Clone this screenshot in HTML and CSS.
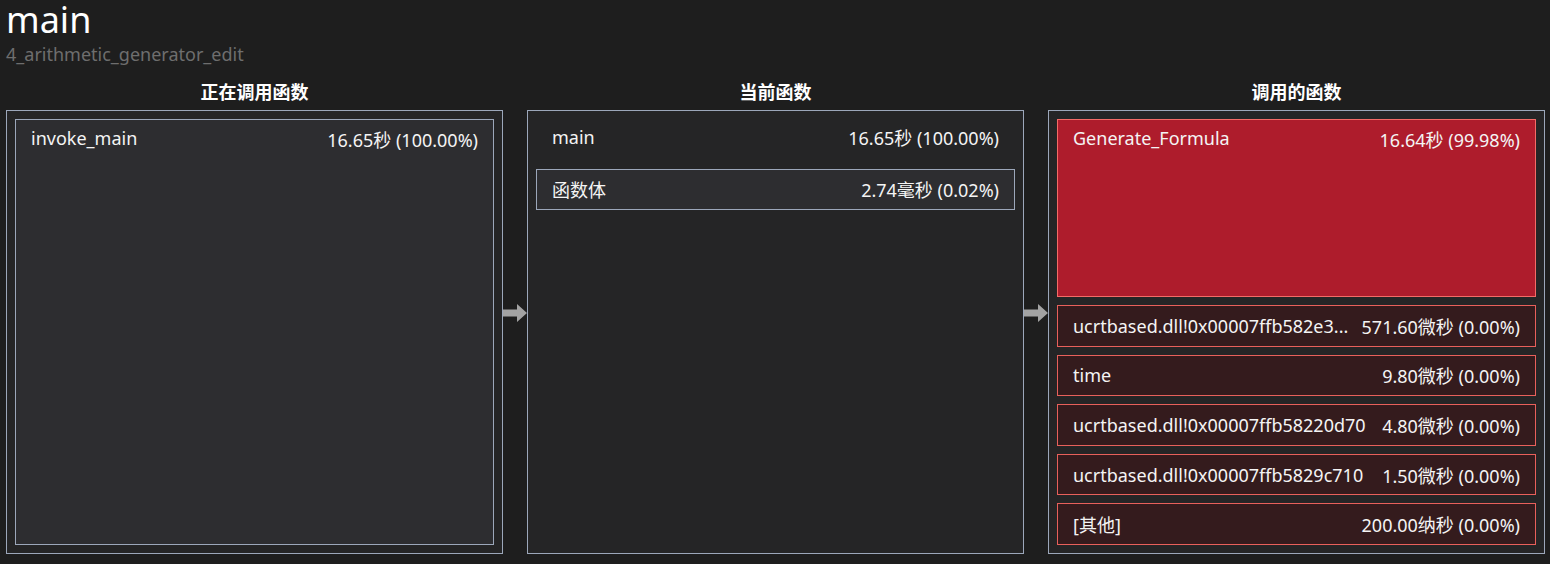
FILE: index.html
```html
<!DOCTYPE html>
<html lang="zh">
<head>
<meta charset="utf-8">
<title>main</title>
<link rel="stylesheet" href="styles.css">
</head>
<body>
<header class="head">
  <h1 class="title">main</h1>
  <div class="subtitle">4_arithmetic_generator_edit</div>
</header>
<main class="cols">
  <section class="col">
    <h2 class="col-title">正在调用函数</h2>
    <div class="panel">
      <div class="item item-grey item-fill">
        <span class="name">invoke_main</span><span class="val">16.65秒 (100.00%)</span>
      </div>
    </div>
  </section>
  <div class="arrow"><svg width="24" height="20" viewBox="0 0 24 20"><path d="M0 6.5H14V1L24 10L14 19V13.5H0Z" fill="#a3a3a3"/></svg></div>
  <section class="col">
    <h2 class="col-title">当前函数</h2>
    <div class="panel">
      <div class="item item-plain">
        <span class="name">main</span><span class="val">16.65秒 (100.00%)</span>
      </div>
      <div class="item item-grey">
        <span class="name">函数体</span><span class="val">2.74毫秒 (0.02%)</span>
      </div>
    </div>
  </section>
  <div class="arrow"><svg width="24" height="20" viewBox="0 0 24 20"><path d="M0 6.5H14V1L24 10L14 19V13.5H0Z" fill="#a3a3a3"/></svg></div>
  <section class="col">
    <h2 class="col-title">调用的函数</h2>
    <div class="panel">
      <div class="item item-hot item-fill">
        <span class="name">Generate_Formula</span><span class="val">16.64秒 (99.98%)</span>
      </div>
      <div class="item item-cold">
        <span class="name">ucrtbased.dll!0x00007ffb582e3...</span><span class="val">571.60微秒 (0.00%)</span>
      </div>
      <div class="item item-cold">
        <span class="name">time</span><span class="val">9.80微秒 (0.00%)</span>
      </div>
      <div class="item item-cold">
        <span class="name">ucrtbased.dll!0x00007ffb58220d70</span><span class="val">4.80微秒 (0.00%)</span>
      </div>
      <div class="item item-cold">
        <span class="name">ucrtbased.dll!0x00007ffb5829c710</span><span class="val">1.50微秒 (0.00%)</span>
      </div>
      <div class="item item-cold">
        <span class="name">[其他]</span><span class="val">200.00纳秒 (0.00%)</span>
      </div>
    </div>
  </section>
</main>
</body>
</html>
```
FILE: styles.css
```css
* { box-sizing: border-box; }
html, body { margin: 0; padding: 0; }
body {
  background: #1e1e1e;
  color: #f1f1f1;
  font-family: "Noto Sans", "Noto Sans CJK SC", sans-serif;
  width: 1550px;
  height: 564px;
  overflow: hidden;
}
.head { padding: 0 0 0 6px; }
.title {
  margin: 0;
  font-size: 36px;
  font-weight: 400;
  line-height: 40px;
  color: #ffffff;
}
.subtitle {
  font-size: 18px;
  line-height: 24px;
  color: #6e6e6e;
  margin-top: 2px;
}
.cols {
  display: flex;
  padding: 0 0 0 6px;
  margin-top: 18px;
}
.col { width: 497px; display: flex; flex-direction: column; }
.col-title {
  margin: 0;
  text-align: center;
  font-size: 18px;
  font-weight: 700;
  line-height: 16px;
  height: 26px;
  color: #ffffff;
}
.panel {
  height: 444px;
  border: 1px solid #9ca7ba;
  background: #252526;
  padding: 8px;
  display: flex;
  flex-direction: column;
  gap: 8px;
}
.arrow {
  width: 24px;
  display: flex;
  align-items: flex-start;
  justify-content: flex-start;
  padding-top: 219px;
}
.arrow svg { display: block; }
.item {
  height: 41.6px;
  flex: none;
  display: flex;
  justify-content: space-between;
  align-items: center;
  padding: 0 15px;
  font-size: 18px;
  color: #f4f4f4;
  white-space: nowrap;
}
.item-fill { flex: 1 1 auto; align-items: flex-start; padding-top: 6px; }
.item-plain { border: 1px solid transparent; padding-bottom: 5px; }
.item-grey { background: #2d2d30; border: 1px solid #9ca7ba; }
.item-hot { background: #ae1c2c; border: 1px solid #f46b67; }
.item-cold { background: #341b1d; border: 1px solid #e8605b; }
```
